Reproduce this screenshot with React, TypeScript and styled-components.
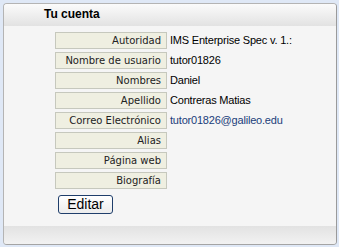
import styled, { createGlobalStyle } from 'styled-components';

const GlobalStyle = createGlobalStyle`
  html, body {
    margin: 0;
    padding: 0;
    background: #dfe8f6;
  }
  body {
    font-family: 'Liberation Sans', Arial, sans-serif;
  }
`;

interface Field {
  label: string;
  value?: string;
  link?: boolean;
}

const fields: Field[] = [
  { label: 'Autoridad', value: 'IMS Enterprise Spec v. 1.:' },
  { label: 'Nombre de usuario', value: 'tutor01826' },
  { label: 'Nombres', value: 'Daniel' },
  { label: 'Apellido', value: 'Contreras Matias' },
  { label: 'Correo Electrónico', value: 'tutor01826@galileo.edu', link: true },
  { label: 'Alias' },
  { label: 'Página web' },
  { label: 'Biografía' },
];

const App: React.FC = () => {
  return (
    <>
      <GlobalStyle />
      <Page>
        <Panel>
          <Header>Tu cuenta</Header>
          <Body>
            <FieldGrid>
              {fields.map((f) => (
                <Row key={f.label}>
                  <LabelCell>{f.label}</LabelCell>
                  <ValueCell isLink={!!f.link}>{f.value}</ValueCell>
                </Row>
              ))}
            </FieldGrid>
            <EditButton>Editar</EditButton>
          </Body>
          <Footer />
        </Panel>
      </Page>
    </>
  );
};

export default App;

const Page = styled.div`
  width: 339px;
  height: 247px;
  padding: 3px 2px 4px 3px;
  box-sizing: border-box;
`;

const Panel = styled.div`
  height: 240px;
  display: flex;
  flex-direction: column;
  background: #f5f5f5;
  border: 1px solid #b4b4b4;
  border-right-color: #9a9a9a;
  border-bottom-color: #a4a4a4;
  border-radius: 4px;
  overflow: hidden;
`;

const Header = styled.div`
  height: 22px;
  padding-left: 40px;
  font-size: 12px;
  font-weight: bold;
  line-height: 20px;
  color: #000;
  background: linear-gradient(#fbfbfb, #e2e2e2);
`;

const Body = styled.div`
  flex: 1;
  padding: 6px 0 0 51px;
  display: flex;
  flex-direction: column;
`;

const FieldGrid = styled.div`
  display: flex;
  flex-direction: column;
  gap: 3px;
`;

const Row = styled.div`
  display: flex;
  height: 17px;
`;

const LabelCell = styled.div`
  width: 112px;
  box-sizing: border-box;
  border: 1px solid #c6c8bd;
  background: #efefe1;
  padding-right: 5px;
  text-align: right;
  font-family: 'DejaVu Sans', Tahoma, sans-serif;
  font-size: 10px;
  line-height: 16px;
  color: #222;
`;

const ValueCell = styled.div<{ isLink: boolean }>`
  padding-left: 3px;
  font-size: 11px;
  letter-spacing: -0.2px;
  line-height: 17px;
  color: ${(props) => (props.isLink ? '#1b3d7a' : '#000')};
`;

const EditButton = styled.button`
  align-self: flex-start;
  margin: 6px 0 0 3px;
  width: 55px;
  height: 19px;
  padding: 0;
  border: 1px solid #1f3e6b;
  border-radius: 3px;
  background: linear-gradient(#ffffff, #ececec);
  font-family: 'Liberation Sans', Arial, sans-serif;
  font-size: 14px;
  line-height: 17px;
  color: #000;
`;

const Footer = styled.div`
  height: 18px;
  background: linear-gradient(#e2e2e2, #f2f2f2);
`;
